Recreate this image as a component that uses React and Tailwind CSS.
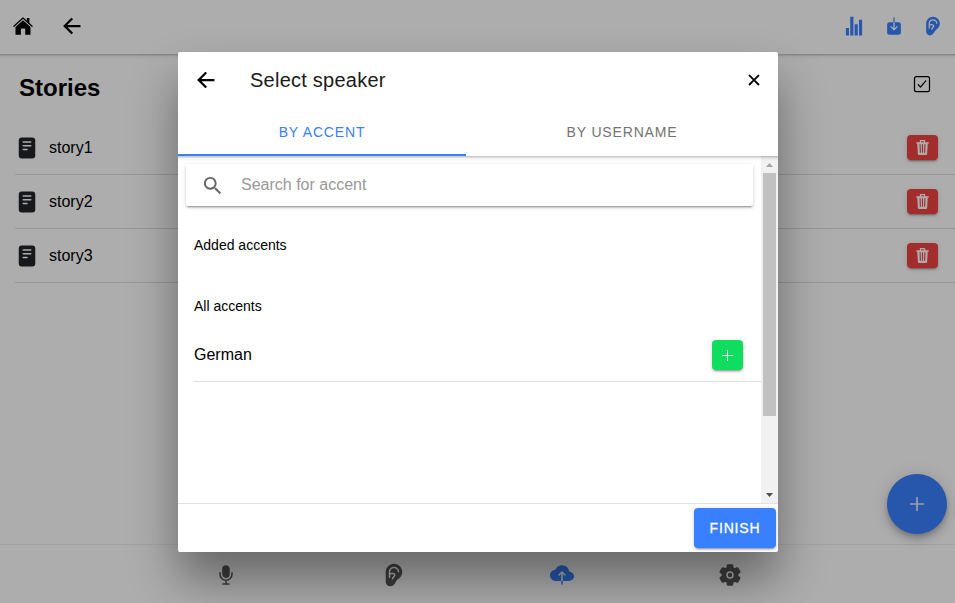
import React from "react";
import {
  IoArrowBackSharp, IoStatsChartSharp, IoDownload, IoEar, IoCheckboxOutline,
  IoReader, IoTrashSharp, IoCloseSharp, IoMic, IoCloudUpload, IoSettings,
} from "react-icons/io5";
import { IoMdSearch } from "react-icons/io";

const stories = ["story1", "story2", "story3"];

const tabs = [
  { Icon: IoMic, active: false },
  { Icon: IoEar, active: false },
  { Icon: IoCloudUpload, active: true },
  { Icon: IoSettings, active: false },
];

function HomeIcon() {
  return (
    <svg width="22" height="22" viewBox="0 0 22 22" fill="currentColor">
      <path d="M3.500 12L11 5.200l7.500 6.800v7.700h-5.300v-6.200H8.900v6.200H3.500z" />
      <path d="M1.900 11.300L11 3l9.100 8.300" fill="none" stroke="currentColor" strokeWidth="1.200" strokeLinecap="round" strokeLinejoin="round" />
      <path d="M14.900 3h2.500v6l-2.500-2.300z" />
    </svg>
  );
}

function Plus({ size, stroke }) {
  return (
    <svg width={size} height={size} viewBox="0 0 15 15" stroke="currentColor" strokeWidth={stroke}>
      <path d="M7.500 0v15M0 7.500h15" />
    </svg>
  );
}

function HeaderShadow() {
  return <div className="absolute inset-x-0 top-full h-[5px] bg-gradient-to-b from-black/25 via-black/5 to-transparent" />;
}

function StoryRow({ name }) {
  return (
    <li className="ml-[15px] flex h-[54px] items-center border-b border-[#dedede] pr-[17px]">
      <IoReader className="h-6 w-6 text-[#222428]" />
      <span className="ml-[10px] grow text-base">{name}</span>
      <button className="flex h-[25px] w-[31px] items-center justify-center rounded-[4px] bg-[#f04141] text-white shadow-[0_3px_1px_-2px_rgba(0,0,0,0.2),0_2px_2px_0_rgba(0,0,0,0.14),0_1px_5px_0_rgba(0,0,0,0.12)]">
        <IoTrashSharp className="h-[17px] w-[17px]" />
      </button>
    </li>
  );
}

function StoriesPage() {
  return (
    <div className="flex h-full flex-col bg-white text-black">
      <header className="relative flex h-[54px] shrink-0 items-center bg-white pb-[2px] pl-3 pr-3">
        <HomeIcon />
        <IoArrowBackSharp className="ml-[26px] h-6 w-6" />
        <div className="ml-auto flex items-center gap-[19px] text-[#3880ff]">
          <IoStatsChartSharp className="mr-px h-5 w-5" />
          <IoDownload className="h-5 w-5" />
          <IoEar className="h-5 w-5" />
        </div>
        <HeaderShadow />
      </header>
      <main className="grow">
        <div className="flex h-[67px] items-center justify-between pl-[19px] pr-[23px]">
          <h1 className="text-2xl font-bold">Stories</h1>
          <IoCheckboxOutline className="mb-[7px] h-5 w-5" />
        </div>
        <ul>
          {stories.map((s) => <StoryRow key={s} name={s} />)}
        </ul>
      </main>
      <footer className="flex h-[59px] shrink-0 justify-center border-t border-[#ededed] pt-px">
        {tabs.map(({ Icon, active }, i) => (
          <div key={i} className={`flex w-[168px] items-center justify-center ${active ? "text-[#3880ff]" : "text-[#595959]"}`}>
            <Icon className="h-6 w-6" />
          </div>
        ))}
      </footer>
      <button className="absolute bottom-[69px] right-2 flex h-[60px] w-[60px] items-center justify-center rounded-full bg-[#3880ff] text-white/85 shadow-[0_3px_5px_-1px_rgba(0,0,0,0.2),0_6px_10px_0_rgba(0,0,0,0.14),0_1px_18px_0_rgba(0,0,0,0.12)]">
        <Plus size={14} stroke={1.8} />
      </button>
    </div>
  );
}

function Scrollbar() {
  return (
    <div className="flex w-[17px] shrink-0 flex-col items-center bg-[#f1f1f1]">
      <div className="flex h-[17px] items-center">
        <svg width="7" height="4" viewBox="0 0 7 4"><path d="M0 4h7L3.500 0z" fill="#a3a3a3" /></svg>
      </div>
      <div className="h-[243px] w-[13px] bg-[#c1c1c1]" />
      <div className="mt-auto flex h-[17px] items-center">
        <svg width="7" height="4" viewBox="0 0 7 4"><path d="M0 0h7L3.500 4z" fill="#505050" /></svg>
      </div>
    </div>
  );
}

function SpeakerModal() {
  return (
    <div className="flex h-[500px] w-[600px] flex-col overflow-hidden rounded-[2px] bg-white text-black">
      <header className="relative z-10 h-[104px] shrink-0">
        <div className="flex h-14 items-center pl-4 pr-[14px]">
          <IoArrowBackSharp className="h-6 w-6" />
          <h2 className="ml-8 grow text-xl tracking-[0.24px] text-[#1a1a1a]">Select speaker</h2>
          <IoCloseSharp className="h-5 w-5" />
        </div>
        <div className="flex h-12 text-sm tracking-[0.84px]">
          <div className="flex w-[288px] items-center justify-center border-b-2 border-[#3880ff] text-[#3880ff]"><span className="pt-[2px]">BY ACCENT</span></div>
          <div className="flex grow items-center justify-center text-[#737373]">BY USERNAME</div>
        </div>
        <HeaderShadow />
      </header>
      <div className="flex min-h-0 grow">
        <div className="grow">
          <div className="p-2">
            <div className="flex h-[42px] items-center rounded-[2px] bg-white pl-[15px] shadow-[0_2px_2px_0_rgba(0,0,0,0.14),0_3px_1px_-2px_rgba(0,0,0,0.2),0_1px_5px_0_rgba(0,0,0,0.12)]">
              <IoMdSearch className="h-[23px] w-[23px] text-[#666666]" />
              <span className="ml-[17px] text-base text-[#999999]">Search for accent</span>
            </div>
          </div>
          <div className="ml-4">
            <div className="flex h-[61px] items-center text-sm">Added accents</div>
            <div className="flex h-[61px] items-center text-sm">All accents</div>
            <div className="flex h-[46px] items-center justify-between border-b border-[#dedede] pr-[18px] text-base">
              <span className="-mt-[7px]">German</span>
              <button className="-mt-[7px] flex h-[30px] w-[31px] items-start justify-center rounded-[4px] bg-[#10dc60] pt-[10px] text-white shadow-[0_3px_1px_-2px_rgba(0,0,0,0.2),0_2px_2px_0_rgba(0,0,0,0.14),0_1px_5px_0_rgba(0,0,0,0.12)]">
                <Plus size={11} stroke={1.4} />
              </button>
            </div>
          </div>
        </div>
        <Scrollbar />
      </div>
      <footer className="flex h-[49px] shrink-0 items-center justify-end border-t border-[#e2e2e2] pr-[2px]">
        <button className="h-10 w-[82px] rounded-[4px] bg-[#3880ff] text-sm tracking-[0.84px] text-white shadow-[0_3px_1px_-2px_rgba(0,0,0,0.2),0_2px_2px_0_rgba(0,0,0,0.14),0_1px_5px_0_rgba(0,0,0,0.12)] [-webkit-text-stroke:0.3px_white]">FINISH</button>
      </footer>
    </div>
  );
}

export default function App() {
  return (
    <div className="relative h-[603px] w-[955px] overflow-hidden font-['Liberation_Sans',Arial,sans-serif]">
      <StoriesPage />
      <div className="absolute inset-0 bg-black/32" />
      <div className="absolute left-[178px] top-[52px] rounded-[2px] shadow-[0_28px_48px_rgba(0,0,0,0.4)]">
        <SpeakerModal />
      </div>
    </div>
  );
}
